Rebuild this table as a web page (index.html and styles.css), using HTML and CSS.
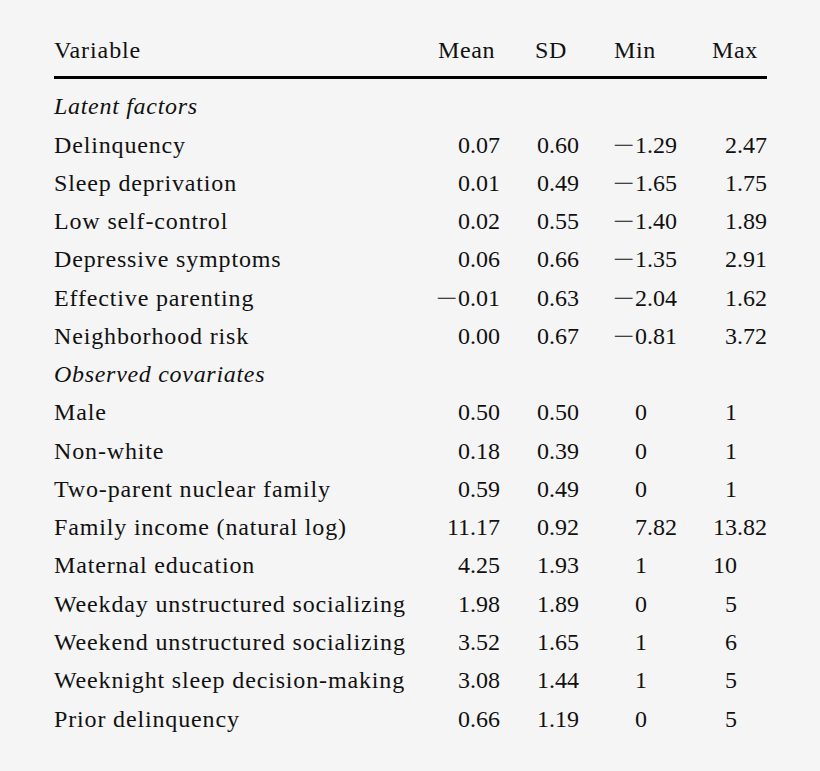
FILE: index.html
```html
<!DOCTYPE html>
<html lang="en">
<head>
    <meta charset="UTF-8">
    <meta name="viewport" content="width=device-width, initial-scale=1.0">
    <title>Descriptive statistics</title>
    <link rel="stylesheet" href="styles.css">
</head>
<body>
    <div class="page">
        <table class="stats">
            <thead>
                <tr>
                    <th class="label">Variable</th>
                    <th class="col-mean">Mean</th>
                    <th class="col-sd">SD</th>
                    <th class="col-min">Min</th>
                    <th class="col-max">Max</th>
                </tr>
            </thead>
            <tbody>
                <tr class="first">
                    <td class="label group" colspan="5">Latent factors</td>
                </tr>
                <tr>
                    <td class="label">Delinquency</td>
                    <td class="col-mean"><span class="i">0</span><span class="f">.07</span></td>
                    <td class="col-sd"><span class="i">0</span><span class="f">.60</span></td>
                    <td class="col-min"><span class="i"><span class="neg">&minus;</span>1</span><span class="f">.29</span></td>
                    <td class="col-max"><span class="i">2</span><span class="f">.47</span></td>
                </tr>
                <tr>
                    <td class="label">Sleep deprivation</td>
                    <td class="col-mean"><span class="i">0</span><span class="f">.01</span></td>
                    <td class="col-sd"><span class="i">0</span><span class="f">.49</span></td>
                    <td class="col-min"><span class="i"><span class="neg">&minus;</span>1</span><span class="f">.65</span></td>
                    <td class="col-max"><span class="i">1</span><span class="f">.75</span></td>
                </tr>
                <tr>
                    <td class="label">Low self-control</td>
                    <td class="col-mean"><span class="i">0</span><span class="f">.02</span></td>
                    <td class="col-sd"><span class="i">0</span><span class="f">.55</span></td>
                    <td class="col-min"><span class="i"><span class="neg">&minus;</span>1</span><span class="f">.40</span></td>
                    <td class="col-max"><span class="i">1</span><span class="f">.89</span></td>
                </tr>
                <tr>
                    <td class="label">Depressive symptoms</td>
                    <td class="col-mean"><span class="i">0</span><span class="f">.06</span></td>
                    <td class="col-sd"><span class="i">0</span><span class="f">.66</span></td>
                    <td class="col-min"><span class="i"><span class="neg">&minus;</span>1</span><span class="f">.35</span></td>
                    <td class="col-max"><span class="i">2</span><span class="f">.91</span></td>
                </tr>
                <tr>
                    <td class="label">Effective parenting</td>
                    <td class="col-mean"><span class="i"><span class="neg">&minus;</span>0</span><span class="f">.01</span></td>
                    <td class="col-sd"><span class="i">0</span><span class="f">.63</span></td>
                    <td class="col-min"><span class="i"><span class="neg">&minus;</span>2</span><span class="f">.04</span></td>
                    <td class="col-max"><span class="i">1</span><span class="f">.62</span></td>
                </tr>
                <tr>
                    <td class="label">Neighborhood risk</td>
                    <td class="col-mean"><span class="i">0</span><span class="f">.00</span></td>
                    <td class="col-sd"><span class="i">0</span><span class="f">.67</span></td>
                    <td class="col-min"><span class="i"><span class="neg">&minus;</span>0</span><span class="f">.81</span></td>
                    <td class="col-max"><span class="i">3</span><span class="f">.72</span></td>
                </tr>
                <tr>
                    <td class="label group" colspan="5">Observed covariates</td>
                </tr>
                <tr>
                    <td class="label">Male</td>
                    <td class="col-mean"><span class="i">0</span><span class="f">.50</span></td>
                    <td class="col-sd"><span class="i">0</span><span class="f">.50</span></td>
                    <td class="col-min"><span class="i">0</span><span class="f"></span></td>
                    <td class="col-max"><span class="i">1</span><span class="f"></span></td>
                </tr>
                <tr>
                    <td class="label">Non-white</td>
                    <td class="col-mean"><span class="i">0</span><span class="f">.18</span></td>
                    <td class="col-sd"><span class="i">0</span><span class="f">.39</span></td>
                    <td class="col-min"><span class="i">0</span><span class="f"></span></td>
                    <td class="col-max"><span class="i">1</span><span class="f"></span></td>
                </tr>
                <tr>
                    <td class="label">Two-parent nuclear family</td>
                    <td class="col-mean"><span class="i">0</span><span class="f">.59</span></td>
                    <td class="col-sd"><span class="i">0</span><span class="f">.49</span></td>
                    <td class="col-min"><span class="i">0</span><span class="f"></span></td>
                    <td class="col-max"><span class="i">1</span><span class="f"></span></td>
                </tr>
                <tr>
                    <td class="label">Family income (natural log)</td>
                    <td class="col-mean"><span class="i">11</span><span class="f">.17</span></td>
                    <td class="col-sd"><span class="i">0</span><span class="f">.92</span></td>
                    <td class="col-min"><span class="i">7</span><span class="f">.82</span></td>
                    <td class="col-max"><span class="i">13</span><span class="f">.82</span></td>
                </tr>
                <tr>
                    <td class="label">Maternal education</td>
                    <td class="col-mean"><span class="i">4</span><span class="f">.25</span></td>
                    <td class="col-sd"><span class="i">1</span><span class="f">.93</span></td>
                    <td class="col-min"><span class="i">1</span><span class="f"></span></td>
                    <td class="col-max"><span class="i">10</span><span class="f"></span></td>
                </tr>
                <tr>
                    <td class="label">Weekday unstructured socializing</td>
                    <td class="col-mean"><span class="i">1</span><span class="f">.98</span></td>
                    <td class="col-sd"><span class="i">1</span><span class="f">.89</span></td>
                    <td class="col-min"><span class="i">0</span><span class="f"></span></td>
                    <td class="col-max"><span class="i">5</span><span class="f"></span></td>
                </tr>
                <tr>
                    <td class="label">Weekend unstructured socializing</td>
                    <td class="col-mean"><span class="i">3</span><span class="f">.52</span></td>
                    <td class="col-sd"><span class="i">1</span><span class="f">.65</span></td>
                    <td class="col-min"><span class="i">1</span><span class="f"></span></td>
                    <td class="col-max"><span class="i">6</span><span class="f"></span></td>
                </tr>
                <tr>
                    <td class="label">Weeknight sleep decision-making</td>
                    <td class="col-mean"><span class="i">3</span><span class="f">.08</span></td>
                    <td class="col-sd"><span class="i">1</span><span class="f">.44</span></td>
                    <td class="col-min"><span class="i">1</span><span class="f"></span></td>
                    <td class="col-max"><span class="i">5</span><span class="f"></span></td>
                </tr>
                <tr>
                    <td class="label">Prior delinquency</td>
                    <td class="col-mean"><span class="i">0</span><span class="f">.66</span></td>
                    <td class="col-sd"><span class="i">1</span><span class="f">.19</span></td>
                    <td class="col-min"><span class="i">0</span><span class="f"></span></td>
                    <td class="col-max"><span class="i">5</span><span class="f"></span></td>
                </tr>
            </tbody>
        </table>
    </div>
</body>
</html>
```

FILE: styles.css
```css
body{
    margin: 0;
    background-color: #f5f5f5;
    color: #111;
    font-family: "Liberation Serif", "Times New Roman", serif;
    font-size: 24px;
}
.page{
    padding: 31px 0 0 54px;
}
.stats{
    border-collapse: separate;
    border-spacing: 0;
}
.stats th,
.stats td{
    padding: 0;
    line-height: 38.27px;
    white-space: nowrap;
}
.stats th{
    font-weight: normal;
    text-align: left;
    letter-spacing: 0.6px;
    border-bottom: 3.5px solid #000;
    padding-bottom: 7px;
}
.stats th.label{
    letter-spacing: 0.9px;
}
.stats tr.first td{
    padding-top: 8px;
}
.label{
    width: 384px;
    text-align: left;
    letter-spacing: 0.85px;
}
.group{
    font-style: italic;
    letter-spacing: 0.7px;
}
.stats td.col-mean,
.stats td.col-sd,
.stats td.col-min,
.stats td.col-max{
    text-align: right;
}
.col-mean{
    width: 62px;
}
.col-sd{
    width: 44px;
    padding-left: 35px !important;
}
.col-min{
    width: 63px;
    padding-left: 35px !important;
}
.col-max{
    width: 55px;
    padding-left: 35px !important;
}
.i{
    display: inline-block;
}
.neg{
    display: inline-block;
    transform: scaleX(1.6);
    margin-right: 4px;
}
.f{
    display: inline-block;
    width: 30px;
    text-align: left;
}
```
